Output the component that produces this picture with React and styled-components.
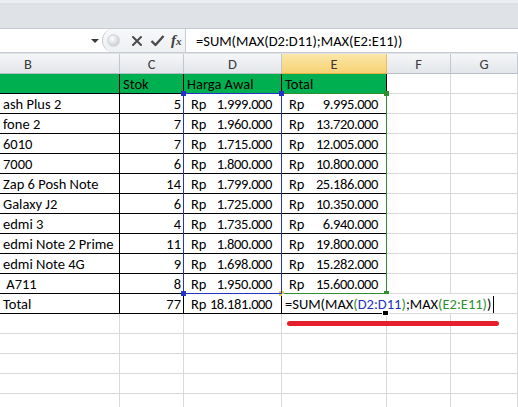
import React from 'react';
import styled, { createGlobalStyle, css } from 'styled-components';

const GlobalStyle = createGlobalStyle`
  html, body {
    margin: 0;
    padding: 0;
    background: #ffffff;
  }
  body {
    font-family: Carlito, Lato, "Liberation Sans", sans-serif;
    overflow: hidden;
  }
`;

const columns = [
  { key: 'B', width: 120, align: 'left' },
  { key: 'C', width: 64 },
  { key: 'D', width: 98 },
  { key: 'E', width: 105, active: true },
  { key: 'F', width: 64 },
  { key: 'G', width: 67 },
];

const products = [
  { name: 'ash Plus 2', stock: 5, price: '1.999.000', total: '9.995.000' },
  { name: 'fone 2', stock: 7, price: '1.960.000', total: '13.720.000' },
  { name: '6010', stock: 7, price: '1.715.000', total: '12.005.000' },
  { name: '7000', stock: 6, price: '1.800.000', total: '10.800.000' },
  { name: 'Zap 6 Posh Note', stock: 14, price: '1.799.000', total: '25.186.000' },
  { name: 'Galaxy J2', stock: 6, price: '1.725.000', total: '10.350.000' },
  { name: 'edmi 3', stock: 4, price: '1.735.000', total: '6.940.000' },
  { name: 'edmi Note 2 Prime', stock: 11, price: '1.800.000', total: '19.800.000' },
  { name: 'edmi Note 4G', stock: 9, price: '1.698.000', total: '15.282.000' },
  { name: ' A711', stock: 8, price: '1.950.000', total: '15.600.000' },
];

const EMPTY_ROWS = 5;
const RANGE_HEIGHT = products.length * 20 + 1;

const App = () => {
  return (
    <>
      <GlobalStyle />
      <StWindow>
        <StRibbon />
        <StFormulaBar>
          <StNameBox>
            <StArrow />
          </StNameBox>
          <StButtons>
            <StGrip />
            <StIcon gap={11}>
              <svg width="12" height="12" viewBox="0 0 12 12">
                <path d="M2 2 L10 10 M10 2 L2 10" stroke="#4a4a4a" strokeWidth="2" strokeLinecap="round" />
              </svg>
            </StIcon>
            <StIcon gap={7}>
              <svg width="15" height="13" viewBox="0 0 15 13">
                <path d="M1.5 7 L5.5 11 L13.5 2" stroke="#4a4a4a" strokeWidth="2.4" fill="none" strokeLinejoin="round" />
              </svg>
            </StIcon>
            <StFx>
              f<small>x</small>
            </StFx>
          </StButtons>
          <StFormulaInput>=SUM(MAX(D2:D11);MAX(E2:E11))</StFormulaInput>
        </StFormulaBar>
        <StGap />

        <StGrid>
          {columns.map(col => (
            <StColHeader key={col.key} active={col.active} left={col.align === 'left'}>
              {col.key}
            </StColHeader>
          ))}

          <StCell table head>&nbsp;</StCell>
          <StCell table head>Stok</StCell>
          <StCell table head>Harga Awal</StCell>
          <StCell table head>Total</StCell>
          <StCell />
          <StCell />

          {products.map((p, i) => (
            <React.Fragment key={p.name}>
              <StCell table>{p.name}</StCell>
              <StCell table right>{p.stock}</StCell>
              <StMoneyCell table pad={9}>
                <span>Rp</span>
                <StAmount>{p.price}</StAmount>
                {i === 0 && (
                  <StRange color="#2433c4" width={99} layer={2}>
                    <StHandle color="#2433c4" top />
                    <StHandle color="#2433c4" top right />
                    <StHandle color="#2433c4" />
                  </StRange>
                )}
              </StMoneyCell>
              <StMoneyCell table pad={8}>
                <span>Rp</span>
                <StAmount>{p.total}</StAmount>
                {i === 0 && (
                  <StRange color="#2f8f2f" width={106} layer={1}>
                    <StHandle color="#2f8f2f" top right />
                    <StHandle color="#2f8f2f" right />
                    <StHandle color="#e6c85a" />
                  </StRange>
                )}
              </StMoneyCell>
              <StCell />
              <StCell />
            </React.Fragment>
          ))}

          <StCell table>Total</StCell>
          <StCell table right>77</StCell>
          <StMoneyCell table pad={9}>
            <span>Rp</span>
            <StAmount>18.181.000</StAmount>
          </StMoneyCell>
          <StCell table>
            <StEditor>
              =SUM(MAX<StRef color="#2f8f2f">(</StRef>
              <StRef color="#2433c4">D2:D11</StRef>
              <StRef color="#2f8f2f">)</StRef>;MAX<StRef color="#2f8f2f">(</StRef>
              <StRef color="#2f8f2f">E2:E11</StRef>
              <StRef color="#2f8f2f">)</StRef>)
              <StCaret />
            </StEditor>
            <StFillHandle />
          </StCell>
          <StCell />
          <StCell />

          {Array.from({ length: EMPTY_ROWS }).map((_, r) =>
            columns.map(col => (
              <StCell key={`${r}-${col.key}`}>
                {r === 0 && col.key === 'E' && <StUnderline />}
              </StCell>
            ))
          )}
        </StGrid>
      </StWindow>
    </>
  );
};

const StWindow = styled.div`
  width: 518px;
  height: 407px;
  overflow: hidden;
  background: #ffffff;
`;

const StRibbon = styled.div`
  height: 25px;
  border-top: 3px solid #eceef1;
  border-bottom: 1px solid #c6cbd2;
  background: #dfe3e8;
`;

const StFormulaBar = styled.div`
  display: flex;
  height: 23px;
  background: #ffffff;
  border-bottom: 1px solid #c6cbd2;
`;

const StNameBox = styled.div`
  width: 102px;
  display: flex;
  align-items: center;
  justify-content: flex-end;
  padding-right: 3px;
  box-sizing: border-box;
  background: #ffffff;
`;

const StArrow = styled.div`
  width: 0;
  height: 0;
  border-left: 4px solid transparent;
  border-right: 4px solid transparent;
  border-top: 4px solid #3a3a3a;
  margin-top: 1px;
`;

const StButtons = styled.div`
  width: 84px;
  display: flex;
  align-items: center;
  padding-left: 4px;
  box-sizing: border-box;
  background: linear-gradient(#f7f8fa, #eef0f3);
  border-left: 1px solid #c9cdd3;
  border-radius: 11px 0 0 11px;
  border-right: 1px solid #c9cdd3;
`;

const StGrip = styled.div`
  width: 11px;
  height: 11px;
  border-radius: 50%;
  background: radial-gradient(circle at 40% 35%, #ffffff, #cdd1d6 70%);
  border: 1px solid #d4d7dc;
`;

const StIcon = styled.span`
  display: flex;
  margin-left: ${({ gap }) => gap}px;
`;

const StFx = styled.span`
  font-family: "Liberation Serif", serif;
  font-style: italic;
  font-weight: bold;
  font-size: 15px;
  color: #3e3e3e;
  margin-left: 6px;

  small {
    font-size: 11px;
  }
`;

const StFormulaInput = styled.div`
  flex: 1;
  display: flex;
  align-items: center;
  padding-left: 10px;
  font-size: 14.5px;
  color: #000000;
`;

const StGap = styled.div`
  height: 1px;
  background: #dfe3e8;
`;

const StGrid = styled.div`
  display: grid;
  grid-template-columns: ${columns.map(c => `${c.width}px`).join(' ')};
  grid-auto-rows: 20px;
`;

const StColHeader = styled.div`
  box-sizing: border-box;
  display: flex;
  align-items: center;
  justify-content: ${({ left }) => (left ? 'flex-start' : 'center')};
  padding-left: ${({ left }) => (left ? '24px' : '0')};
  font-size: 14.5px;
  color: #3a3a3a;
  background: linear-gradient(#f5f6f8, #e3e6ea);
  border-right: 1px solid #c4c8ce;
  border-bottom: 1px solid #b9bec5;

  ${({ active }) =>
    active &&
    css`
      background: linear-gradient(#fbe7a9, #f7d274);
      border-right-color: #e9bf58;
      border-bottom-color: #e2b24a;
    `}
`;

const StCell = styled.div`
  position: relative;
  box-sizing: border-box;
  display: flex;
  align-items: center;
  justify-content: ${({ right }) => (right ? 'flex-end' : 'flex-start')};
  padding: ${({ right }) => (right ? '1px 2px 0 0' : '1px 0 0 3px')};
  font-size: 14.5px;
  color: #000000;
  white-space: pre;
  overflow: visible;
  border-right: 1px solid ${({ table }) => (table ? '#000000' : '#d9d9d9')};
  border-bottom: 1px solid ${({ table }) => (table ? '#000000' : '#d9d9d9')};
  background: ${({ head }) => (head ? '#00b050' : 'transparent')};
`;

const StMoneyCell = styled(StCell)`
  justify-content: space-between;
  padding: 1px ${({ pad }) => pad}px 0 7px;
`;

const StAmount = styled.span`
  letter-spacing: -0.4px;
`;

const StRange = styled.div`
  position: absolute;
  z-index: ${({ layer }) => layer};
  left: -1px;
  top: -1px;
  width: ${({ width }) => width}px;
  height: ${RANGE_HEIGHT}px;
  box-sizing: border-box;
  border: 1px solid ${({ color }) => color};
  pointer-events: none;
`;

const StHandle = styled.div`
  position: absolute;
  width: 5px;
  height: 5px;
  background: ${({ color }) => color};
  ${({ top }) => (top ? 'top: -3px;' : 'bottom: -3px;')}
  ${({ right }) => (right ? 'right: -3px;' : 'left: -3px;')}
`;

const StEditor = styled.div`
  position: absolute;
  z-index: 3;
  left: 0;
  top: 0;
  width: 218px;
  height: 19px;
  display: flex;
  align-items: center;
  padding: 1px 0 0 3px;
  box-sizing: border-box;
  background: #ffffff;
  white-space: pre;
`;

const StRef = styled.span`
  color: ${({ color }) => color};
`;

const StCaret = styled.span`
  display: inline-block;
  width: 1px;
  height: 17px;
  margin-left: 2px;
  background: #000000;
`;

const StFillHandle = styled.div`
  position: absolute;
  z-index: 4;
  right: -3px;
  bottom: -3px;
  width: 5px;
  height: 4px;
  background: #000000;
  border: 1px solid #ffffff;
`;

const StUnderline = styled.div`
  position: absolute;
  z-index: 2;
  left: 5px;
  top: 7px;
  width: 212px;
  height: 5px;
  border-radius: 3px;
  background: #e51f2b;
`;

export default App;
